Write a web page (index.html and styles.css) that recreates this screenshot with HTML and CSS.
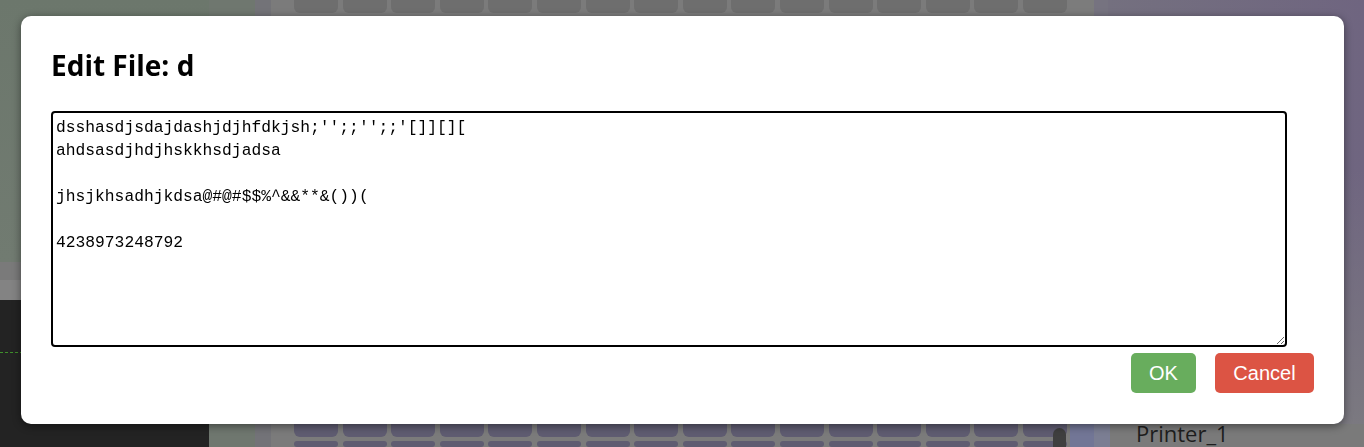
FILE: index.html
```html
<!DOCTYPE html>
<html lang="en">
<head>
<meta charset="utf-8">
<title>Edit File</title>
<link rel="stylesheet" href="styles.css">
</head>
<body>
<div class="app">
  <aside class="sidebar">
    <div class="side-top"></div>
    <div class="side-band"></div>
    <div class="side-dark"><div class="dash"></div></div>
  </aside>
  <main class="workspace">
    <div class="keys keys-top">
      <span class="key"></span><span class="key"></span><span class="key"></span><span class="key"></span>
      <span class="key"></span><span class="key"></span><span class="key"></span><span class="key"></span>
      <span class="key"></span><span class="key"></span><span class="key"></span><span class="key"></span>
      <span class="key"></span><span class="key"></span><span class="key"></span><span class="key"></span>
    </div>
    <div class="spacer"></div>
    <div class="keys keys-bottom">
      <span class="key"></span><span class="key"></span><span class="key"></span><span class="key"></span>
      <span class="key"></span><span class="key"></span><span class="key"></span><span class="key"></span>
      <span class="key"></span><span class="key"></span><span class="key"></span><span class="key"></span>
      <span class="key"></span><span class="key"></span><span class="key"></span><span class="key"></span>
    </div>
    <div class="keys keys-bottom">
      <span class="key"></span><span class="key"></span><span class="key"></span><span class="key"></span>
      <span class="key"></span><span class="key"></span><span class="key"></span><span class="key"></span>
      <span class="key"></span><span class="key"></span><span class="key"></span><span class="key"></span>
      <span class="key"></span><span class="key"></span><span class="key"></span><span class="key"></span>
    </div>
    <div class="scroll-thumb"></div>
  </main>
  <section class="rightpanel">
    <div class="rp-top"></div>
    <div class="rp-bottom">
      <div class="rp-col"></div>
      <span class="printer">Printer_1</span>
    </div>
  </section>
</div>

<div class="overlay">
  <div class="modal">
    <h2 class="modal-title">Edit File: d</h2>
    <textarea class="editor" spellcheck="false">dsshasdjsdajdashjdjhfdkjsh;'';;'';;'[]][][
ahdsasdjhdjhskkhsdjadsa

jhsjkhsadhjkdsa@#@#$$%^&amp;&amp;**&amp;())(

4238973248792</textarea>
    <div class="actions">
      <button class="btn btn-ok">OK</button>
      <button class="btn btn-cancel">Cancel</button>
    </div>
  </div>
</div>
</body>
</html>
```

FILE: styles.css
```css
* { box-sizing: border-box; }

html, body {
  margin: 0;
  padding: 0;
  width: 1364px;
  height: 447px;
  overflow: hidden;
}

body {
  font-family: "Open Sans", "Noto Sans", sans-serif;
  background: #7a7a7a;
}

.app {
  display: grid;
  grid-template-columns: 209px 861px 1fr;
  height: 447px;
}

/* left sidebar */
.sidebar {
  display: grid;
  grid-template-rows: 262px 38px 1fr;
}
.side-top { background: linear-gradient(180deg, #6c776c, #717b71); }
.side-band { background: linear-gradient(180deg, #7a7a7a 0 18px, #838383 18px); }
.side-dark {
  background: #232323;
  padding-top: 52px;
}
.dash {
  height: 1px;
  border-top: 1px dashed #3f8f2c;
}

/* workspace with keys */
.workspace {
  position: relative;
  display: grid;
  grid-template-rows: 13px 1fr 40px 6px;
  row-gap: 4px;
  overflow: hidden;
  background: linear-gradient(90deg, #6f776f 0 46px, #737378 46px 62px, #7b7b7b 62px);
}
.keys {
  display: flex;
  gap: 4.6px;
  padding-left: 85px;
  overflow: hidden;
}
.key {
  flex: 0 0 44px;
  border-radius: 0 0 6px 6px;
}
.keys-top .key { background: #6e6e6e; }
.keys-bottom .key {
  background: #5f5c71;
  border-radius: 6px;
}
.keys-bottom:last-of-type .key { border-radius: 6px 6px 0 0; }
.spacer { background: #7a7a7a; }

.scroll-thumb {
  position: absolute;
  right: 4px;
  bottom: 0;
  width: 13px;
  height: 19px;
  border-radius: 7px 7px 0 0;
  background: #3f3f3f;
}

/* right panel */
.rightpanel {
  display: grid;
  grid-template-rows: 1fr 23px;
}
.rp-top {
  background:
    linear-gradient(180deg, rgba(122,122,122,0) 40%, #7b7980 100%),
    linear-gradient(90deg, #7c7c7c 0 24px, #767380 24px 38px, #74707f 38px, #6f6580 100%);
}
.rp-bottom {
  display: flex;
  align-items: flex-start;
  background: #7a7a7a;
  overflow: hidden;
}
.rp-col {
  width: 40px;
  height: 23px;
  background: linear-gradient(90deg, #727696 0 24px, #7b7e93 24px);
}
.printer {
  margin-left: 26px;
  margin-top: -6px;
  font-family: "Open Sans", sans-serif;
  font-size: 22px;
  line-height: 30px;
  color: #1e1e1e;
}

/* modal */
.overlay {
  position: fixed;
  inset: 0;
  padding: 16px 20px 23px 21px;
  display: flex;
}
.modal {
  flex: 1;
  background: #ffffff;
  border-radius: 10px;
  box-shadow: 0 2px 8px rgba(0, 0, 0, 0.45);
  padding: 30px 30px;
  display: flex;
  flex-direction: column;
  align-items: flex-start;
}
.modal-title {
  margin: 0 0 27px 0;
  font-family: "Open Sans", sans-serif;
  font-weight: 700;
  font-size: 28px;
  line-height: 38px;
  color: #000;
}
.editor {
  width: 1236px;
  height: 236px;
  margin: 0;
  border: 2px solid #000;
  border-radius: 4px;
  padding: 3px 3px 2px;
  font-family: "Liberation Mono", monospace;
  font-size: 16.3px;
  line-height: 23px;
  color: #000;
  background: #fff;
  outline: none;
  resize: both;
}
.actions {
  align-self: stretch;
  display: flex;
  justify-content: flex-end;
  gap: 19px;
  margin-top: 6px;
}
.btn {
  height: 40px;
  padding: 0 18px;
  border: none;
  border-radius: 5px;
  font-family: "Liberation Sans", Arial, sans-serif;
  font-size: 20px;
  color: #fff;
  cursor: pointer;
}
.btn-ok { background: #68ad5d; width: 65px; }
.btn-cancel { background: #dc5444; width: 99px; }
```
